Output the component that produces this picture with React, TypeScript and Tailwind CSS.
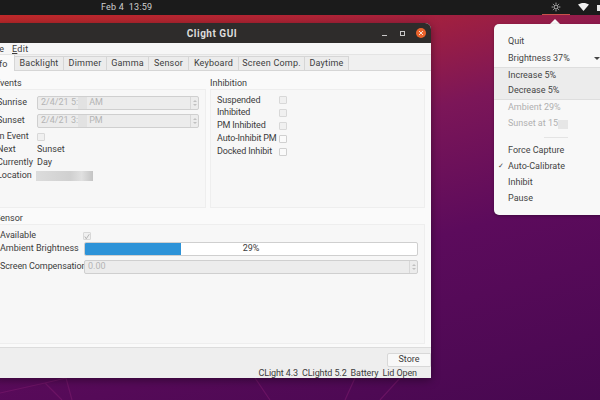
import React from "react";

function Spin({ text, blur, rest, w = "w-[162px]" }: { text: string; blur?: boolean; rest?: string; w?: string }) {
  return (
    <div className={`${w} h-[14px] flex items-center rounded-[2px] border border-[#cfcfcf] bg-[#ececec] pl-[3px] text-[9px] text-[#b4b4b4]`}>
      <span>{text}</span>
      {blur && <span className="w-[9px] h-[12px] bg-[#e2e2e2]" />}
      {rest && <span className="ml-[2px]">{rest}</span>}
      <div className="ml-auto w-[8px] h-full border-l border-[#d8d8d8] flex flex-col items-center justify-center gap-[2px] text-[#c0c0c0]">
        <span className="w-0 h-0 border-x-[2px] border-x-transparent border-b-[2px] border-b-[#c0c0c0]" />
        <span className="w-0 h-0 border-x-[2px] border-x-transparent border-t-[2px] border-t-[#c0c0c0]" />
      </div>
    </div>
  );
}

function Check({ checked, dim = true }: { checked?: boolean; dim?: boolean }) {
  return (
    <div className={`w-[8px] h-[8px] rounded-[1px] border flex items-center justify-center ${dim ? "border-[#d8d8d8] bg-[#f0f0f0]" : "border-[#d0d0d0] bg-[#fafafa]"}`}>
      {checked && (
        <svg width="7" height="7" viewBox="0 0 8 8" fill="none" stroke="#a0a0a0" strokeWidth="1">
          <path d="M1 4l2 3 4-6" />
        </svg>
      )}
    </div>
  );
}

const tabs: [string, string][] = [
  ["Backlight", "w-[49px]"],
  ["Dimmer", "w-[43px]"],
  ["Gamma", "w-[42px]"],
  ["Sensor", "w-[40px]"],
  ["Keyboard", "w-[50px]"],
  ["Screen Comp.", "w-[66px]"],
  ["Daytime", "w-[44px]"],
];

function EventRow({ label, children, h = "h-[13px]" }: { label: string; children: React.ReactNode; h?: string }) {
  return (
    <div className={`flex items-center ${h}`}>
      <span className="w-[40px] -ml-[3px] shrink-0 whitespace-nowrap">{label}</span>
      {children}
    </div>
  );
}

function MenuItem({ children, dim, check }: { children: React.ReactNode; dim?: boolean; check?: boolean }) {
  return (
    <div className={`relative h-[16.3px] flex items-center pl-[14px] ${dim ? "text-[#b0b0b0]" : "text-[#444]"}`}>
      {check && <span className="absolute left-[4px] text-[7px]">✓</span>}
      {children}
    </div>
  );
}

export default function App() {
  return (
    <div
      className="relative w-[600px] h-[400px] overflow-hidden bg-[linear-gradient(165deg,#c22a28_0%,#b02436_18%,#7c1658_40%,#5c0b5c_63%,#470850_100%)] text-[#3c3c3c]"
      style={{ fontFamily: 'Roboto, "Noto Sans", sans-serif' }}
    >
      <svg className="absolute left-0 top-[378px]" width="600" height="22" viewBox="0 0 600 22" fill="none" stroke="#7a1a6c" strokeWidth="1.2" opacity="0.6">
        <path d="M0 15L45 5L66 0M66 0L72 22M45 5L62 22M255 0L270 22M355 0L345 22M380 22L400 0" />
      </svg>

      {/* top panel */}
      <div className="relative h-[15px] bg-[#1b1b1b] text-[#d0d0d0] text-[9px] flex items-center">
        <span className="ml-[101px] tracking-[0.2px]">Feb 4&nbsp; 13:59</span>
        <div className="absolute left-[542px] top-0 h-[15px] w-[28px] border-b border-[#c8524a] flex items-center justify-center">
          <svg width="10" height="10" viewBox="0 0 12 12" fill="none" stroke="#d8d8d8" strokeWidth="1">
            <circle cx="6" cy="6" r="2.4" />
            <path d="M6 .8v1.5M6 9.7v1.5M.8 6h1.5M9.7 6h1.5M2.3 2.3l1 1M8.7 8.7l1 1M2.3 9.7l1-1M8.7 3.3l1-1" />
          </svg>
        </div>
        <svg className="absolute left-[578px] top-[3px]" width="11" height="8" viewBox="0 0 11 8">
          <path d="M0 1.6C3 -.5 8 -.5 11 1.6L5.5 8z" fill="#f0f0f0" />
        </svg>
        <div className="absolute left-[597px] top-[5px] w-[3px] h-[6px] bg-[#e8e8e8]" />
      </div>

      {/* window */}
      <div className="absolute left-[-7px] top-[23px] w-[438px] h-[355px] rounded-t-[6px] overflow-hidden bg-[#f6f6f6] flex flex-col shadow-[0_2px_10px_rgba(0,0,0,0.4)] text-[9px]">
        <div className="relative h-[20px] shrink-0 bg-[#2e2c2b] flex items-center justify-center text-[#dcdcdc] font-bold text-[10px] tracking-[0.5px]">
          Clight GUI
          <span className="absolute left-[389px] top-[12px] w-[5px] h-px bg-[#c8c8c8]" />
          <span className="absolute left-[407px] top-[8px] w-[5px] h-[5px] border border-[#c8c8c8]" />
          <span className="absolute left-[423px] top-[5px] w-[10px] h-[10px] rounded-full bg-[#e9632c] flex items-center justify-center">
            <svg width="6" height="6" viewBox="0 0 6 6" stroke="#f8e0d4" strokeWidth="1"><path d="M1 1l4 4M5 1L1 5" /></svg>
          </span>
        </div>
        <div className="h-[12px] shrink-0 bg-[#f6f6f6] border-b border-[#e4e4e4] flex items-center text-[9px] pt-[2px]">
          <span className="ml-[-3px] w-[22px] text-right pr-[8px]">File</span>
          <span className="tracking-[0.3px]"><span className="underline">E</span>dit</span>
        </div>
        <div className="h-[16px] shrink-0 bg-[#f0f0f0] border-b border-[#d6d6d6] flex items-end">
          <div className="w-[22px] h-[16px] -mb-px bg-[#fafafa] border-r border-[#d6d6d6] flex items-center justify-center z-10 pt-[3px]"><span className="mr-[8px]">Info</span></div>
          {tabs.map(([t, w]) => (
            <div key={t} className={`${w} h-[15px] -mb-px pt-[1px] shrink-0 bg-[#ececec] border-r border-t border-b border-[#d6d6d6] flex items-center justify-center tracking-[0.2px]`}>{t}</div>
          ))}
        </div>

        <div className="flex-1 bg-[#fafafa] border-b border-[#dcdcdc] flex flex-col px-[6px] pt-[6px]">
          <div className="flex gap-[4px]">
            <div className="w-[207px]">
              <div className="h-[12px] leading-[12px] -ml-[5px] pl-[1px]">Events</div>
              <div className="h-[119px] bg-[#f7f7f7] border border-[#eeeeee] pt-[6px]">
                <EventRow label="Sunrise" h="h-[14px]"><Spin text="2/4/21 5:" blur rest="AM" /></EventRow>
                <div className="h-[4px]" />
                <EventRow label="Sunset" h="h-[14px]"><Spin text="2/4/21 3:" blur rest="PM" /></EventRow>
                <div className="h-[2px]" />
                <EventRow label="In Event"><Check /></EventRow>
                <EventRow label="Next"><span>Sunset</span></EventRow>
                <EventRow label="Currently"><span>Day</span></EventRow>
                <EventRow label="Location"><span className="w-[57px] h-[10px] bg-[linear-gradient(90deg,#dcdcdc,#d0d0d0_60%,#e0e0e0_80%,#c4c4c4)] -ml-[1px]" /></EventRow>
              </div>
            </div>
            <div className="w-[215px]">
              <div className="h-[12px] leading-[12px]">Inhibition</div>
              <div className="h-[119px] bg-[#f7f7f7] border border-[#eeeeee] pt-[4px] pl-[6px]">
                {["Suspended", "Inhibited", "PM Inhibited", "Auto-Inhibit PM", "Docked Inhibit"].map((t, i) => (
                  <div key={t} className="h-[12.8px] flex items-center">
                    <span className="w-[62px] whitespace-nowrap tracking-[-0.15px]">{t}</span>
                    <Check dim={i < 3} />
                  </div>
                ))}
              </div>
            </div>
          </div>
          <div className="h-[2px]" />
          <div className="h-[12px] mt-[2px] leading-[12px] -ml-[5px] pl-[1px]">Sensor</div>
          <div className="h-[120px] bg-[#f7f7f7] border border-[#eeeeee] pr-[6px] pt-[5px]">
            <div className="h-[12px] flex items-center"><span className="w-[83px] whitespace-nowrap">Available</span><Check checked /></div>
            <div className="h-[14px] flex items-center">
              <span className="w-[84px] whitespace-nowrap">Ambient Brightness</span>
              <div className="relative flex-1 h-[14px] rounded-[2px] border border-[#cfcfcf] bg-white overflow-hidden flex items-center justify-center">
                <div className="absolute left-0 top-0 h-full w-[96px] bg-[#2d93d8]" />
                <span className="relative">29%</span>
              </div>
            </div>
            <div className="h-[14px] flex items-center mt-[4px]">
              <span className="w-[84px] whitespace-nowrap tracking-[-0.1px]">Screen Compensation</span>
              <Spin text="0.00" w="flex-1" />
            </div>
          </div>
        </div>

        <div className="relative h-[30px] shrink-0 bg-[#eeeeee]">
          <div className="absolute right-0 top-[5px] w-[44px] h-[14px] bg-[#f8f8f8] border border-[#d8d8d8] flex items-center justify-center rounded-l-[2px]">Store</div>
          <div className="absolute right-[14px] top-[20px] flex gap-[4px] h-[12px] items-center whitespace-nowrap tracking-[-0.1px]">
            <span>CLight 4.3</span><span>CLightd 5.2</span><span>Battery</span><span>Lid Open</span>
          </div>
        </div>
      </div>

      {/* popup */}
      <div className="absolute left-[549px] top-[19px] w-0 h-0 border-x-[6px] border-x-transparent border-b-[6px] border-b-[#f8f8f8]" />
      <div className="absolute left-[494px] top-[24px] w-[120px] h-[191px] rounded-[5px] bg-[#f8f8f8] text-[9px] pt-[10px] shadow-[0_1px_3px_rgba(0,0,0,0.3)]">
        <MenuItem>Quit</MenuItem>
        <div className="relative">
          <MenuItem>Brightness 37%</MenuItem>
          <span className="absolute left-[100px] top-[7px] w-0 h-0 border-x-[3px] border-x-transparent border-t-[3px] border-t-[#444]" />
        </div>
        <div className="bg-[#ececec] border-y border-[#dedede] h-[33px] flex flex-col">
          <MenuItem>Increase 5%</MenuItem>
          <MenuItem>Decrease 5%</MenuItem>
        </div>
        <MenuItem dim>Ambient 29%</MenuItem>
        <MenuItem dim>
          Sunset at 15<span className="w-[10px] h-[9px] bg-[#e6e6e6]" />
        </MenuItem>
        <div className="h-[10px] flex items-center"><div className="ml-[50px] w-[24px] h-px bg-[#e4e4e4]" /></div>
        <MenuItem>Force Capture</MenuItem>
        <MenuItem check>Auto-Calibrate</MenuItem>
        <MenuItem>Inhibit</MenuItem>
        <MenuItem>Pause</MenuItem>
      </div>
    </div>
  );
}
